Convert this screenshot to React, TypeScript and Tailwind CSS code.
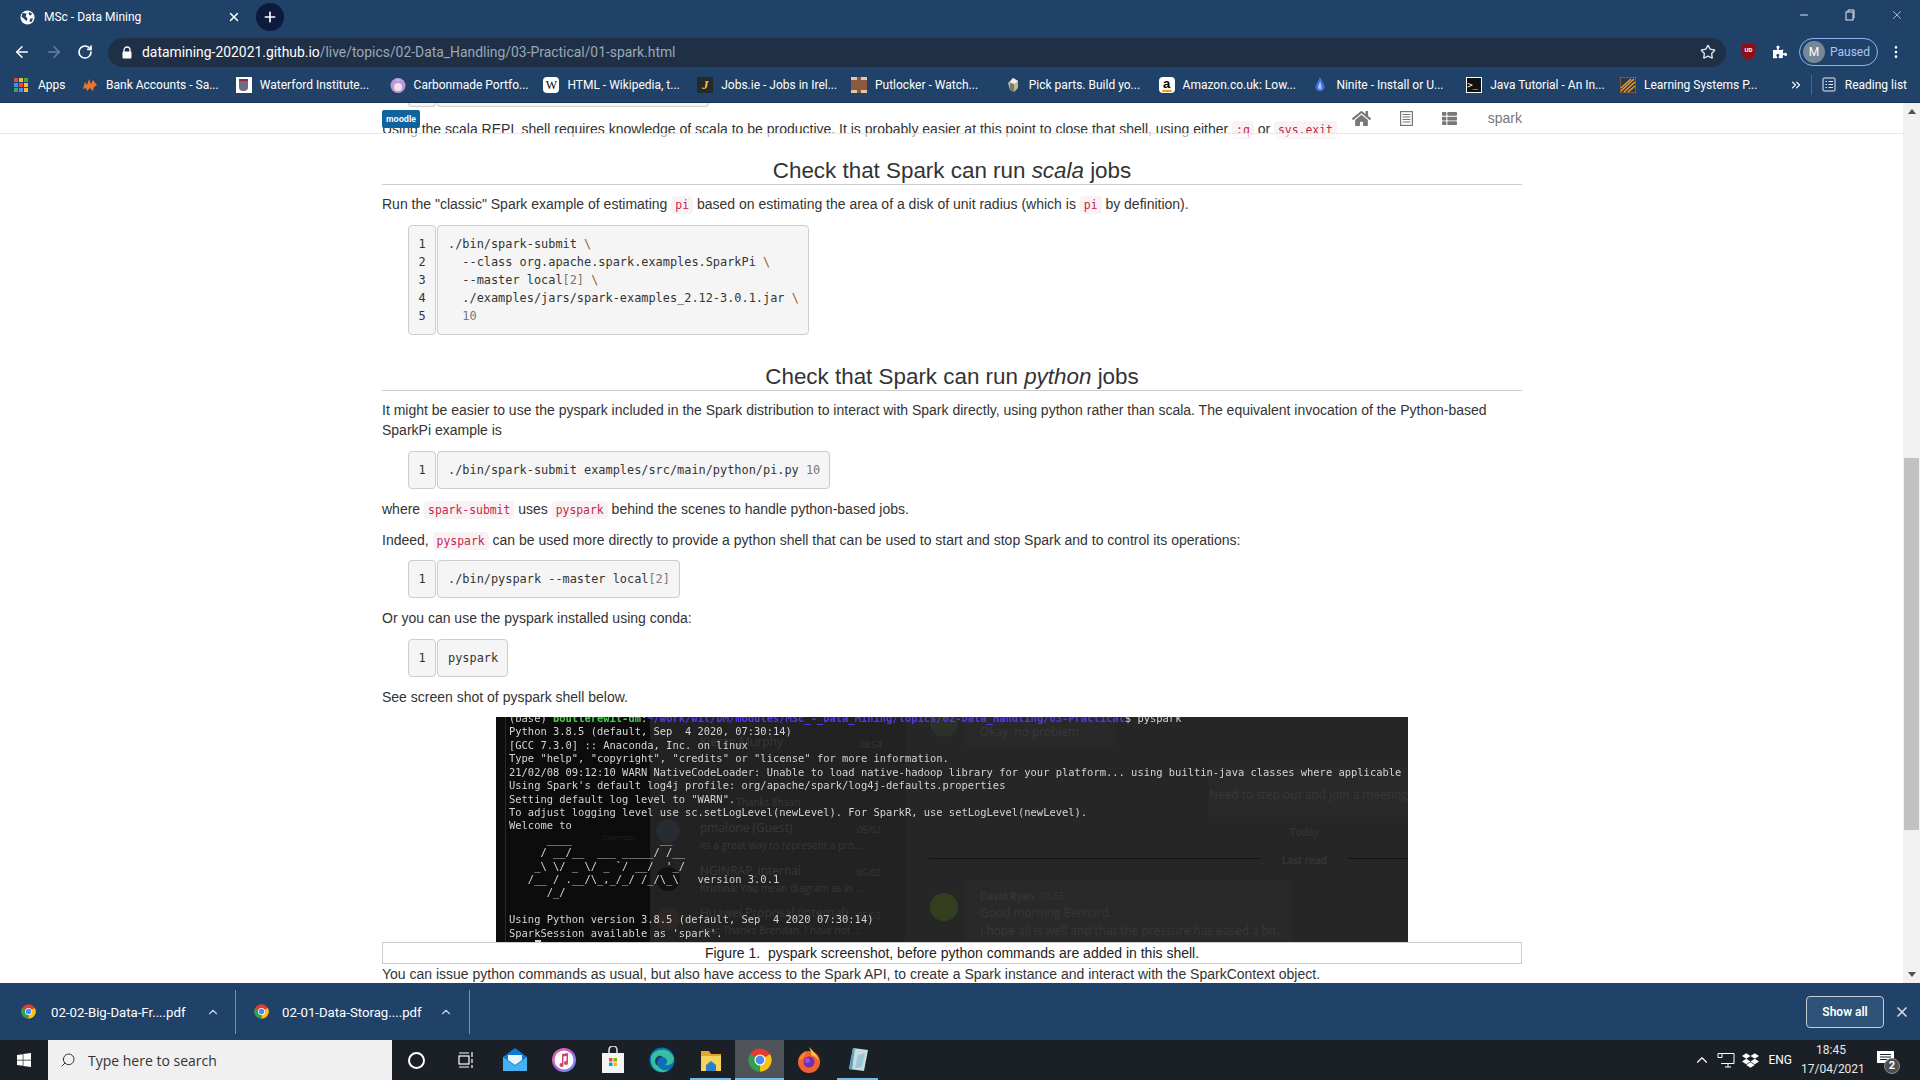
import React from "react";
import { ArrowLeft, ArrowRight, RotateCw, Star, X, Plus, Minus, ChevronUp, ChevronsRight, EllipsisVertical, Search } from "lucide-react";
import { FaHome, FaPuzzlePiece, FaThList, FaDropbox, FaWindows } from "react-icons/fa";

const ui = "font-['Roboto','Liberation_Sans',sans-serif]";
const mono = "font-['DejaVu_Sans_Mono',monospace]";

function ChromeIcon({ size = 16 }: { size?: number }) {
  return (
    <svg width={size} height={size} viewBox="0 0 24 24">
      <circle cx="12" cy="12" r="11.5" fill="#e33b2e" />
      <path d="M12 12 L22 6.2 A11.5 11.5 0 0 1 12 23.5 Z" fill="#fbc116" />
      <path d="M12 12 L12 23.5 A11.5 11.5 0 0 1 2 6.2 Z" fill="#2ba14b" />
      <circle cx="12" cy="12" r="5.6" fill="#fff" />
      <circle cx="12" cy="12" r="4.4" fill="#4a8af4" />
    </svg>
  );
}

function Kw({ children }: { children: React.ReactNode }) {
  return <code className={`${mono} text-[11.4px] bg-[#f9f2f4] text-[#c7254e] rounded px-1 py-[2px]`}>{children}</code>;
}

function CodeBlock({ lines }: { lines: React.ReactNode[] }) {
  return (
    <div className={`flex ml-[26px] gap-[1px] ${mono} text-[11.9px] leading-[18px] text-[#333]`}>
      <div className="w-[28px] border border-[#ccc] rounded bg-[#f5f5f5] py-[9px] text-center">
        {lines.map((_, i) => <div key={i}>{i + 1}</div>)}
      </div>
      <div className="border border-[#ccc] rounded bg-[#f5f5f5] py-[9px] pl-[10px] pr-[9px]">
        {lines.map((l, i) => <div key={i} className="whitespace-pre">{l}</div>)}
      </div>
    </div>
  );
}

const B = () => <span className="text-[#a0561c]">\</span>;
const G = ({ children }: { children: React.ReactNode }) => <span className="text-[#777]">{children}</span>;

function Heading({ children, cls }: { children: React.ReactNode; cls: string }) {
  return <h2 className={`${cls} text-center text-[22.4px] leading-[26px] font-normal text-[#333] border-b border-[#ccc]`}>{children}</h2>;
}

function TerminalShot() {
  const faint = "absolute whitespace-nowrap font-['Open_Sans',sans-serif] text-[#383838]";
  return (
    <div className="relative h-[225px] w-[912px] mx-auto bg-[#262626] overflow-hidden">
      <div className="absolute left-0 top-0 bottom-0 w-[154px] bg-[#0c0c0c]" />
      <div className="absolute left-[154px] top-0 bottom-0 w-[255px] bg-[#222222]" />
      <div className="absolute left-[9px] top-0 bottom-0 w-[1px] bg-[#2a2a2a]" />
      <div className="absolute left-[469px] top-[163px] w-[327px] h-[62px] bg-[#292929]" />
      <div className="absolute left-[469px] top-0 w-[150px] h-[30px] bg-[#292929]" />
      <div className="absolute left-[713px] top-[50px] w-[199px] h-[50px] bg-[#292929]" />

      <span className={`${faint} left-[204px] top-[15px] text-[12px]`}>Kieran Murphy</span>
      <span className={`${faint} left-[363px] top-[18px] text-[9px]`}>08:54</span>
      <span className={`${faint} left-[240px] top-[75px] text-[10px]`}>Thanks Ehsan</span>
      <span className="absolute whitespace-nowrap font-['Open_Sans',sans-serif] left-[106px] top-[110px] text-[8px] text-[#222]">Calendar</span>
      <span className={`${faint} left-[204px] top-[101px] text-[12px]`}>pmalone (Guest)</span>
      <span className={`${faint} left-[361px] top-[103px] text-[9px]`}>05/02</span>
      <span className={`${faint} left-[204px] top-[118px] text-[10px]`}>its a great way to represent a pro...</span>
      <span className={`${faint} left-[204px] top-[144px] text-[12px]`}>NGINRAP_internal</span>
      <span className={`${faint} left-[361px] top-[146px] text-[9px]`}>05/02</span>
      <span className={`${faint} left-[204px] top-[161px] text-[10px]`}>Kristina: You mean diagram as in ...</span>
      <span className={`${faint} left-[204px] top-[186px] text-[12px]`}>Huawei Proposal (internal)</span>
      <span className={`${faint} left-[361px] top-[189px] text-[9px]`}>05/02</span>
      <span className={`${faint} left-[204px] top-[203px] text-[10px]`}>You: Thanks Brendan. I have not ...</span>

      <span className={`${faint} left-[484px] top-[4px] text-[11.9px]`}>Okay, no problem.</span>
      <span className={`${faint} left-[713px] top-[67px] text-[11.9px]`}>Need to step out and join a meeting</span>
      <span className={`${faint} left-[794px] top-[105px] text-[10px]`}>Today</span>
      <span className="absolute left-[433px] top-[141px] w-[333px] h-[1px] bg-[#151515]" />
      <span className="absolute left-[851px] top-[141px] w-[61px] h-[1px] bg-[#151515]" />
      <span className={`${faint} left-[786px] top-[133px] text-[10px] font-semibold text-[#25253f]`}>Last read</span>
      <span className={`${faint} left-[484px] top-[169px] text-[10px] font-semibold`}>David Ryan</span>
      <span className={`${faint} left-[545px] top-[169px] text-[9px]`}>08:55</span>
      <span className={`${faint} left-[484px] top-[185px] text-[11.9px]`}>Good morning Bernard.</span>
      <span className={`${faint} left-[484px] top-[203px] text-[11.9px]`}>I hope all is well and that the pressure has eased a bit.</span>

      <span className="absolute left-[434px] top-[-8px] w-[28px] h-[28px] rounded-full bg-[#2b3328]" />
      <span className="absolute left-[434px] top-[176px] w-[28px] h-[28px] rounded-full bg-[#333f1e]" />
      <span className="absolute left-[160px] top-[102px] w-[24px] h-[24px] rounded-full bg-[#262c31]" />
      <span className="absolute left-[160px] top-[150px] w-[24px] h-[24px] rounded-full bg-[#111]" />
      <span className="absolute left-[160px] top-[190px] w-[24px] h-[24px] rounded-full bg-[#2e2624]" />

      <pre className={`absolute left-[13px] top-[-5px] ${mono} text-[10.45px] leading-[13.42px] text-[#d4d4d4] blur-[0.35px] m-0`}>
        <span>(base) </span><span className="text-[#45d24c] font-bold">boutlerewit-dm</span><span>:</span><span className="text-[#4a3cf0] font-bold">~/work/wit/DM/modules/MSc_-_Data_Mining/topics/02-Data_Handling/03-Practical</span><span>$ pyspark</span>{"\n"}
        {`Python 3.8.5 (default, Sep  4 2020, 07:30:14)
[GCC 7.3.0] :: Anaconda, Inc. on linux
Type "help", "copyright", "credits" or "license" for more information.
21/02/08 09:12:10 WARN NativeCodeLoader: Unable to load native-hadoop library for your platform... using builtin-java classes where applicable
Using Spark's default log4j profile: org/apache/spark/log4j-defaults.properties
Setting default log level to "WARN".
To adjust logging level use sc.setLogLevel(newLevel). For SparkR, use setLogLevel(newLevel).
Welcome to
      ____              __
     / __/__  ___ _____/ /__
    _\\ \\/ _ \\/ _ \`/ __/  '_/
   /__ / .__/\\_,_/_/ /_/\\_\\   version 3.0.1
      /_/

Using Python version 3.8.5 (default, Sep  4 2020 07:30:14)
SparkSession available as 'spark'.
`}
      </pre>
      <span className="absolute left-[39px] top-[223px] w-[6px] h-[2px] bg-[#d4d4d4]" />
    </div>
  );
}

const bookmarks: { t: string; i: React.ReactNode }[] = [
  { t: "Bank Accounts - Sa...", i: <svg width="16" height="16" viewBox="0 0 16 16"><path d="M1 12 L3 5 L5 8 L7 2 L9 7 L11 3 L15 8 L12 10 L11 14 L8 11 L5 14 L4 11 Z" fill="#e8762c" /></svg> },
  { t: "Waterford Institute...", i: <div className="w-4 h-4 bg-white flex items-center justify-center"><div className="w-[9px] h-3 bg-[#6a6f80] rounded-b-sm border-t-2 border-[#a02040]" /></div> },
  { t: "Carbonmade Portfo...", i: <svg width="16" height="16" viewBox="0 0 16 16"><circle cx="8" cy="8.5" r="7.5" fill="#b89ad8" /><circle cx="8" cy="10" r="4" fill="#f6dfe6" /><circle cx="8" cy="3" r="1.8" fill="#c9b2e6" /></svg> },
  { t: "HTML - Wikipedia, t...", i: <div className="w-4 h-4 bg-white rounded-sm text-black text-[12px] leading-4 text-center font-['Liberation_Serif',serif]">W</div> },
  { t: "Jobs.ie - Jobs in Irel...", i: <div className="w-4 h-4 bg-[#24292f] text-[#f3c623] text-[13px] leading-4 text-center italic font-bold font-['Liberation_Serif',serif]">J</div> },
  { t: "Putlocker - Watch...", i: <div className="w-4 h-4 bg-[#8a5a3c] border-y-[3px] border-dashed border-[#e0c8a8]" /> },
  { t: "Pick parts. Build yo...", i: <svg width="16" height="16" viewBox="0 0 16 16"><path d="M8 1 L13 4 L13 11 L9 15 L5 13 L3 6 Z" fill="#c9b58c" /><path d="M8 1 L13 4 L9 7 L5 5 Z" fill="#eee" /><path d="M9 7 L9 15 L5 13 L5 6Z" fill="#7a7a72" /></svg> },
  { t: "Amazon.co.uk: Low...", i: <div className="relative w-4 h-4 bg-white rounded-sm text-black text-[13px] leading-[14px] text-center font-bold font-['Liberation_Sans',sans-serif]">a<span className="absolute left-[3px] bottom-[1px] w-[10px] h-[2px] bg-[#f90] rounded-full" /></div> },
  { t: "Ninite - Install or U...", i: <svg width="16" height="16" viewBox="0 0 16 16"><path d="M8 0 C11 5 13 8 12.5 11 C12 15 4 15.5 3.5 11 C3 8 6 5 8 0Z" fill="#3d6fe0" /><path d="M8 4 C9 7 10 9 9.5 12 C8 13 6 12 6 10 C6 8 7.5 7 8 4Z" fill="#a8c4f6" /></svg> },
  { t: "Java Tutorial - An In...", i: <div className={`w-4 h-4 bg-[#111] border border-white text-white text-[9px] leading-[14px] ${mono}`}>&gt;_</div> },
  { t: "Learning Systems P...", i: <svg width="16" height="16" viewBox="0 0 16 16"><rect width="16" height="16" fill="#2a3a4e" stroke="#d8702a" /><path d="M1 14 L14 2 M1 11 L11 2 M4 15 L15 5 M8 15 L15 9" stroke="#f0a030" strokeWidth="1.4" /></svg> },
];

function TaskIcon({ children, cls = "" }: { children: React.ReactNode; cls?: string }) {
  return <div className={`w-[49px] h-10 flex items-center justify-center shrink-0 ${cls}`}>{children}</div>;
}

export default function App() {
  return (
    <div className={`w-[1920px] h-[1080px] overflow-hidden flex flex-col bg-white ${ui}`}>
      {/* tab strip */}
      <div className="h-[36px] shrink-0 bg-[#214268] flex items-center text-white">
        <div className="w-[256px] pl-[20px] pr-[15px] flex items-center mb-[2px]">
          <svg width="15" height="15" viewBox="0 0 16 16"><circle cx="8" cy="8" r="7.5" fill="#fff" /><path d="M3 3 L7 4 L6 7 L8 9 L7 12 L4 9 L1.5 7Z M10 2 L13 4 L11 6 L9 4Z M11 9 L14 9 L12 13 L10 12Z" fill="#214268" /></svg>
          <span className="ml-[9px] text-[12px] flex-1">MSc - Data Mining</span>
          <X size={14} strokeWidth={2.5} />
        </div>
        <div className="w-[28px] h-[28px] rounded-full bg-[#0e1a3d] flex items-center justify-center mb-[2px]"><Plus size={16} strokeWidth={2.5} /></div>
        <div className="ml-auto flex items-center pr-[16px] gap-[35px] text-[#dfe5ec] mb-[7px]">
          <Minus size={12} />
          <svg width="10" height="12" viewBox="0 0 10 12" fill="none" stroke="#dfe5ec"><rect x="1" y="3" width="7" height="8" /><path d="M3 3 V1 H9 V9 H8" /></svg>
          <X size={14} strokeWidth={1.2} />
        </div>
      </div>
      {/* toolbar */}
      <div className="h-[32px] shrink-0 bg-[#214268] flex items-center text-white">
        <div className="flex items-center w-[108px] pl-[13px] gap-[14px]">
          <ArrowLeft size={18} />
          <ArrowRight size={18} className="text-[#6c829b]" />
          <RotateCw size={16} strokeWidth={2.5} />
        </div>
        <div className="w-[1618px] h-[29px] rounded-full bg-[#1f3046] flex items-center pl-[14px] pr-[10px]">
          <svg width="10" height="13" viewBox="0 0 10 13"><path d="M2 6 V4 A3 3 0 0 1 8 4 V6" fill="none" stroke="#fff" strokeWidth="1.3" /><rect x="0.5" y="5.5" width="9" height="7" rx="1" fill="#fff" /></svg>
          <span className="ml-[10px] text-[13.9px]">datamining-202021.github.io<span className="text-[#9aa8b8]">/live/topics/02-Data_Handling/03-Practical/01-spark.html</span></span>
          <Star size={16} className="ml-auto text-[#e4e8ee]" />
        </div>
        <div className="w-[46px] flex justify-center pr-[1px]">
          <div className="w-[13px] h-[16px] bg-[#8c1016] rounded-b-full text-[6px] leading-[12px] text-center font-bold">UD</div>
        </div>
        <FaPuzzlePiece size={14} className="ml-[1px]" />
        <div className="ml-[12px] w-[79px] h-[28px] rounded-full border border-[#8ab4f8] flex items-center pl-[3px] gap-[5px]">
          <div className="w-[22px] h-[22px] rounded-full bg-[#75889a] text-[12px] leading-[22px] text-center">M</div>
          <span className="text-[12px] text-[#a8c7fa]">Paused</span>
        </div>
        <EllipsisVertical size={16} className="ml-[10px]" />
      </div>
      {/* bookmarks */}
      <div className="h-[35px] shrink-0 bg-[#214268] border-b border-[#16304f] flex items-center text-white text-[12px] pb-[1px]">
        <div className="w-[82px] pl-[14px] flex items-center gap-[10px]">
          <svg width="14" height="14" viewBox="0 0 14 14">
            {[0, 1, 2].flatMap((r) => [0, 1, 2].map((c) => (
              <rect key={`${r}-${c}`} x={c * 5} y={r * 5} width="4" height="4" fill={["#e8453c", "#f9bb2d", "#3aa757", "#4a8af4", "#e8453c", "#f9bb2d", "#3aa757", "#4a8af4", "#f9bb2d"][r * 3 + c]} />
            )))}
          </svg>
          <span>Apps</span>
        </div>
        {bookmarks.map((b) => (
          <div key={b.t} className="w-[153.8px] shrink-0 flex items-center gap-[8px] whitespace-nowrap">
            {b.i}
            <span>{b.t}</span>
          </div>
        ))}
        <ChevronsRight size={14} className="ml-[15px]" />
        <div className="ml-[8px] w-[1px] h-[20px] bg-[#4a6685]" />
        <svg className="ml-[10px]" width="14" height="15" viewBox="0 0 14 15" fill="none" stroke="#e6eaf0"><rect x="1" y="1" width="12" height="13" rx="1" /><path d="M3.5 4.5 H5 M6.5 4.5 H11 M3.5 7.5 H5 M6.5 7.5 H11 M3.5 10.5 H5 M6.5 10.5 H11" /></svg>
        <span className="ml-[9px] whitespace-nowrap">Reading list</span>
      </div>
      {/* page */}
      <div className="flex-1 min-h-0 flex relative bg-white">
        <div className="flex-1 overflow-hidden pl-[382px] relative font-['Liberation_Sans',sans-serif] text-[14px] leading-[20px] text-[#333]">
          <div className="w-[1140px]">
            <div className="flex ml-[26px] gap-[1px] h-[4px]">
              <div className="w-[28px] border-x border-b border-[#ccc] rounded-b bg-[#f5f5f5]" />
              <div className="w-[272px] border-x border-b border-[#ccc] rounded-b bg-[#f5f5f5]" />
            </div>
            <p className="mt-[12px]">Using the scala REPL shell requires knowledge of scala to be productive. It is probably easier at this point to close that shell, using either <Kw>:q</Kw> or <Kw>sys.exit</Kw></p>
            <Heading cls="mt-[18px]">Check that Spark can run <em>scala</em> jobs</Heading>
            <p className="mt-[9px]">Run the "classic" Spark example of estimating <Kw>pi</Kw> based on estimating the area of a disk of unit radius (which is <Kw>pi</Kw> by definition).</p>
            <div className="mt-[10px]">
              <CodeBlock lines={[
                <>./bin/spark-submit <B /></>,
                <>  --class org.apache.spark.examples.SparkPi <B /></>,
                <>  --master local<G>[2]</G> <B /></>,
                <>  ./examples/jars/spark-examples_2.12-3.0.1.jar <B /></>,
                <>  <G>10</G></>,
              ]} />
            </div>
            <Heading cls="mt-[29px]">Check that Spark can run <em>python</em> jobs</Heading>
            <p className="mt-[9px]">It might be easier to use the pyspark included in the Spark distribution to interact with Spark directly, using python rather than scala. The equivalent invocation of the Python-based SparkPi example is</p>
            <div className="mt-[11px]"><CodeBlock lines={[<>./bin/spark-submit examples/src/main/python/pi.py <G>10</G></>]} /></div>
            <p className="mt-[10px]">where <Kw>spark-submit</Kw> uses <Kw>pyspark</Kw> behind the scenes to handle python-based jobs.</p>
            <p className="mt-[10px]">Indeed, <Kw>pyspark</Kw> can be used more directly to provide a python shell that can be used to start and stop Spark and to control its operations:</p>
            <div className="mt-[9px]"><CodeBlock lines={[<>./bin/pyspark --master local<G>[2]</G></>]} /></div>
            <p className="mt-[10px]">Or you can use the pyspark installed using conda:</p>
            <div className="mt-[11px]"><CodeBlock lines={["pyspark"]} /></div>
            <p className="mt-[10px]">See screen shot of pyspark shell below.</p>
            <div className="mt-[10px]"><TerminalShot /></div>
            <div className="border border-[#ccc] h-[22px] text-center leading-[20px] text-[#222]">Figure 1.&nbsp; pyspark screenshot, before python commands are added in this shell.</div>
            <p>You can issue python commands as usual, but also have access to the Spark API, to create a Spark instance and interact with the SparkContext object.</p>
          </div>
          {/* fixed navbar overlay */}
          <div className="absolute left-0 right-0 top-[30px] h-[1px] bg-[#e7e7e7]" />
          <div className="absolute left-0 right-0 top-[31px] h-[4px] bg-white/60" />
          <div className="absolute left-[382px] top-[7px] w-[38px] h-[18px] rounded-[2px] bg-[#0f639f] text-white text-[8.5px] leading-[18px] text-center font-bold">moodle</div>
          <div className="absolute left-[1352px] top-[4px] w-[170px] h-[22px] flex items-center text-[#777]">
            <FaHome size={19} />
            <svg className="ml-[29px]" width="13" height="15" viewBox="0 0 13 15" fill="none" stroke="#777" strokeWidth="1.2"><rect x="0.6" y="0.6" width="11.8" height="13.8" /><path d="M2.5 3.5 H10.5 M2.5 6 H10.5 M2.5 8.5 H10.5 M2.5 11 H10.5" /></svg>
            <FaThList size={15} className="ml-[29px]" />
            <span className="ml-auto">spark</span>
          </div>
        </div>
        {/* scrollbar */}
        <div className="w-[17px] shrink-0 bg-[#f1f1f1] flex flex-col items-center relative">
          <div className="h-[17px] flex items-center justify-center"><div className="w-0 h-0 border-x-[4px] border-x-transparent border-b-[5px] border-b-[#505050]" /></div>
          <div className="mt-[338px] w-[15px] h-[372px] bg-[#c1c1c1]" />
          <div className="mt-auto h-[17px] flex items-center justify-center"><div className="w-0 h-0 border-x-[4px] border-x-transparent border-t-[5px] border-t-[#505050]" /></div>
        </div>
      </div>
      {/* download bar */}
      <div className="h-[57px] shrink-0 bg-[#214268] flex items-center text-white text-[12px]">
        <div className="w-[236px] h-[44px] border-r border-[#7b8ea4] flex items-center pl-[21px]">
          <ChromeIcon size={15} />
          <span className="ml-[15px] w-[150px] text-[13.2px] pt-[2px]">02-02-Big-Data-Fr....pdf</span>
          <ChevronUp size={14} className="text-[#c5cfda] ml-[5px]" />
        </div>
        <div className="w-[234px] h-[44px] border-r border-[#7b8ea4] flex items-center pl-[18px]">
          <ChromeIcon size={15} />
          <span className="ml-[13px] w-[150px] text-[13.2px] pt-[2px]">02-01-Data-Storag....pdf</span>
          <ChevronUp size={14} className="text-[#c5cfda] ml-[7px]" />
        </div>
        <div className="ml-auto w-[78px] h-[32px] rounded-[4px] border border-[#c3ccd7] bg-[#2f5279] flex items-center justify-center font-semibold">Show all</div>
        <X size={16} strokeWidth={2.5} className="ml-[10px] mr-[10px] text-[#d5dbe3]" />
      </div>
      {/* taskbar */}
      <div className="h-[40px] shrink-0 bg-[#1b2027] flex items-center text-white">
        <div className="w-[48px] flex justify-center"><FaWindows size={16} /></div>
        <div className="w-[344px] h-[40px] bg-[#f0f0f0] flex items-center pl-[12px] text-[#333] text-[15px]">
          <Search size={16} className="-scale-x-100" strokeWidth={1.5} />
          <span className="ml-[12px] font-['Open_Sans',sans-serif] text-[14px]">Type here to search</span>
        </div>
        <div className="flex items-center">
          <TaskIcon><div className="w-[17px] h-[17px] rounded-full border-2 border-white" /></TaskIcon>
          <TaskIcon>
            <svg width="18" height="18" viewBox="0 0 18 18" fill="none" stroke="#fff" strokeWidth="1.2"><rect x="2" y="5" width="10" height="8" /><path d="M2 2 H12 M2 16 H12 M15 1 V6 M15 8 V12 M15 14 V17" /></svg>
          </TaskIcon>
          <TaskIcon>
            <svg width="26" height="26" viewBox="0 0 26 26"><path d="M13 1 L25 10 V24 H1 V10 Z" fill="#0f78d4" /><path d="M6 8 H20 V13 L13 18 L6 13Z" fill="#e8f4fc" /><path d="M1 10 L13 19 L25 10 V24 H1Z" fill="#47b0ef" /></svg>
          </TaskIcon>
          <TaskIcon>
            <svg width="26" height="26" viewBox="0 0 26 26"><defs><linearGradient id="it" x1="0" y1="0" x2="1" y2="1"><stop offset="0" stopColor="#f3698f" /><stop offset="0.5" stopColor="#b45fe0" /><stop offset="1" stopColor="#4fa5f5" /></linearGradient></defs><circle cx="13" cy="13" r="12" fill="url(#it)" /><circle cx="13" cy="13" r="9.5" fill="#fff" /><path d="M11 7 L17 6 V16 A2 2 0 1 1 15.5 14 V9 L12.5 9.5 V18 A2 2 0 1 1 11 16 Z" fill="#d5436f" /></svg>
          </TaskIcon>
          <TaskIcon>
            <svg width="24" height="28" viewBox="0 0 24 28"><path d="M8 8 V4 A4 4 0 0 1 16 4 V8" fill="none" stroke="#d8d8d8" strokeWidth="1.6" /><rect x="1" y="7" width="22" height="20" fill="#f4f4f4" /><rect x="8" y="12" width="3.5" height="3.5" fill="#f25022" /><rect x="12.5" y="12" width="3.5" height="3.5" fill="#7fba00" /><rect x="8" y="16.5" width="3.5" height="3.5" fill="#00a4ef" /><rect x="12.5" y="16.5" width="3.5" height="3.5" fill="#ffb900" /></svg>
          </TaskIcon>
          <TaskIcon>
            <svg width="26" height="26" viewBox="0 0 26 26"><circle cx="13" cy="13" r="12.5" fill="#0c6fb8" /><path d="M2 10 C4 2 20 -1 24.5 10 C26 16 21 19 16 18 C20 15 18 10 13 10 C8 10 6 15 9 19 C12 24 18 24 21 22 C15 28 3 25 2 14Z" fill="#35c1a0" /><path d="M6 14 C7 8 12 8 14 10 C9 10 7 15 9 19 C7 18 6 16 6 14Z" fill="#1b3d66" /></svg>
          </TaskIcon>
          <TaskIcon cls="relative">
            <svg width="22" height="24" viewBox="0 0 22 24"><path d="M1 3 H9 L11 6 H21 V12 H1Z" fill="#e8a32a" /><rect x="1" y="8" width="20" height="15" fill="#f7d35c" /><path d="M6 23 V17 L11 13 L16 17 V23Z" fill="#2a80c8" /></svg>
            <span className="absolute bottom-0 left-[4px] right-[4px] h-[2px] bg-[#76b9ed]" />
          </TaskIcon>
          <TaskIcon cls="relative bg-[#4d5359]">
            <ChromeIcon size={24} />
            <span className="absolute bottom-0 left-0 right-0 h-[2px] bg-[#76b9ed]" />
          </TaskIcon>
          <TaskIcon>
            <svg width="24" height="26" viewBox="0 0 24 26"><circle cx="12" cy="15" r="11" fill="#f4622c" /><path d="M12 0 C16 4 21 8 22 15 C20 10 17 9 14 8 C15 5 13 3 12 0Z" fill="#fdc32f" /><path d="M2 12 C4 7 8 5 9 4 C9 8 6 10 4 13Z" fill="#f98a2a" /><circle cx="12" cy="15" r="5.5" fill="#6d2fb8" /><circle cx="10.5" cy="13.5" r="2.5" fill="#b04ad0" /></svg>
          </TaskIcon>
          <TaskIcon cls="relative">
            <svg width="24" height="26" viewBox="0 0 24 26"><path d="M7 1 L22 3 L18 24 L3 22Z" fill="#c8dce6" /><path d="M3 22 L7 1 L9 1.3 L6 22.4Z" fill="#5f9fb8" /><path d="M12 8 L19 6 L16 20 L9 21Z" fill="#9bc6d6" /></svg>
            <span className="absolute bottom-0 left-[4px] right-[4px] h-[2px] bg-[#76b9ed]" />
          </TaskIcon>
        </div>
        <div className="ml-auto flex items-center">
          <ChevronUp size={18} strokeWidth={1.5} />
          <svg className="ml-[6px]" width="18" height="16" viewBox="0 0 18 16" fill="none" stroke="#fff"><path d="M4 1.5 H17 V11.5 H4 M1 1.5 H5 V5.5 H1 Z M8 15 H14 M11 11.5 V15" /></svg>
          <FaDropbox size={17} className="ml-[7px]" />
          <span className="ml-[9px] text-[12px]">ENG</span>
          <div className="ml-[9px] w-[60px] text-center text-[12px] leading-[19px] text-[#e8e8e8]">
            <div>18:45</div>
            <div>17/04/2021</div>
          </div>
          <div className="relative ml-[16px] mr-[25px] w-[18px] h-[18px]">
            <svg width="17" height="16" viewBox="0 0 17 16"><path d="M0 0 H17 V12 H11 L8 15 V12 H0Z" fill="#fff" /><path d="M3 3.5 H14 M3 6 H14 M3 8.5 H10" stroke="#1b2027" /></svg>
            <div className="absolute left-[7px] top-[7px] w-[16px] h-[16px] rounded-full bg-[#4b4f55] border border-[#8a8a8a] text-[11px] leading-[14px] text-center font-bold">2</div>
          </div>
        </div>
      </div>
    </div>
  );
}
